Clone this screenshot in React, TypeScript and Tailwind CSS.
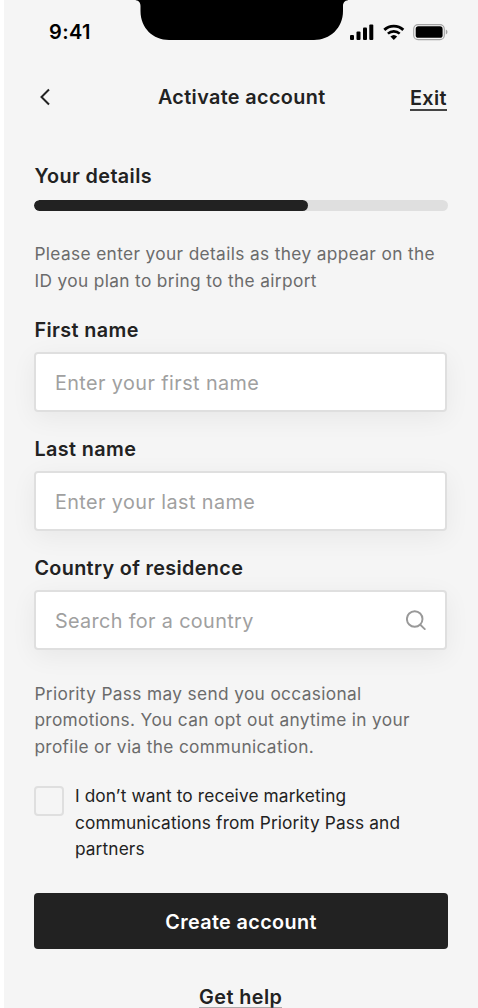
import React from "react";

function Notch() {
  return (
    <svg className="absolute left-[130px] top-0" width="216" height="41" viewBox="0 0 216 41">
      <path d="M0 0C4 0 6.500 2 6.500 6V11C6.500 28 19 40 35 40H180C196 40 209 28 209 11V6C209 2 211.500 0 216 0Z" fill="#000" />
    </svg>
  );
}

function StatusIcons() {
  return (
    <svg width="98" height="18" viewBox="0 0 98 18" fill="none">
      <g fill="#000">
        <rect x="0" y="11" width="4" height="5" rx="1" />
        <rect x="6.500" y="7.500" width="4" height="8.500" rx="1" />
        <rect x="13" y="3.500" width="4" height="12.500" rx="1" />
        <rect x="19.300" y="0.500" width="4" height="15.500" rx="1" />
      </g>
      <g transform="translate(33 0)">
        <path d="M1.300 5.900A14 14 0 0 1 20.300 5.900" stroke="#000" strokeWidth="2.800" />
        <path d="M4.900 9.600A8.800 8.800 0 0 1 16.700 9.600" stroke="#000" strokeWidth="2.600" />
        <path d="M10.800 16L7.400 12.600A5 5 0 0 1 14.200 12.600Z" fill="#000" />
      </g>
      <rect x="63.700" y="0.600" width="30.600" height="15" rx="4.400" stroke="#a3a3a3" strokeWidth="1.100" />
      <rect x="65.700" y="2.300" width="26.900" height="11.500" rx="2.600" fill="#000" />
      <path d="M95.800 5.600C98 6.400 98 9.800 95.800 10.600Z" fill="#a3a3a3" />
    </svg>
  );
}

type FieldProps = { label: string; placeholder: string; search?: boolean; textClass: string; labelClass: string };

function Field({ label, placeholder, search, textClass, labelClass }: FieldProps) {
  return (
    <label className="flex h-[119px] shrink-0 flex-col">
      <span className={`h-[34px] text-[19.8px] leading-6 font-[570] whitespace-nowrap ${labelClass}`}>{label}</span>
      <span className="flex h-[60px] w-[413px] items-center rounded-[4px] border-2 border-[#dfdfdf] bg-white pr-[19px] pl-[18.500px] shadow-[0_6px_26px_rgba(0,0,0,0.06)]">
        <input
          className={`mt-[2px] min-w-0 flex-1 bg-transparent text-[19.8px] leading-6 font-[440] outline-none placeholder:text-[#a0a0a0] ${textClass}`}
          placeholder={placeholder}
        />
        {search && (
          <svg className="mt-px" width="20" height="21" viewBox="0 0 20 21" fill="none" stroke="#999" strokeWidth="1.900" strokeLinecap="round">
            <circle cx="8.700" cy="9" r="7.800" />
            <path d="M14.300 14.700L18.800 19.100" />
          </svg>
        )}
      </span>
    </label>
  );
}

export default function App() {
  return (
    <div className="h-[1008px] w-[478px] overflow-hidden bg-white pl-1 font-['Inter',sans-serif] text-[#222]">
      <main className="relative flex h-full flex-col bg-[#f5f5f5] pr-[31px] pl-[30.400px]">
        <Notch />
        <div className="flex h-16 shrink-0 items-start justify-between pt-[20px]">
          <span className="ml-[14.600px] text-[20px] leading-6 font-[580] tracking-[0.400px] text-black">9:41</span>
          <div className="-mr-px pt-[4px]"><StatusIcons /></div>
        </div>
        <header className="flex h-[67px] shrink-0 items-center justify-between">
          <button aria-label="Back" className="mb-px w-[39px] pl-[4.500px]">
            <svg width="12" height="18" viewBox="0 0 12 18" fill="none" stroke="#222" strokeWidth="2">
              <path d="M10 1.500L2.500 9L10 16.500" />
            </svg>
          </button>
          <h1 className="mb-px text-[19.8px] leading-6 font-[570] tracking-[0.370px] whitespace-nowrap">Activate account</h1>
          <a href="#" className="mt-px h-[25px] border-b-2 border-[#444] text-[19.8px] leading-[24px] font-[570] tracking-[0.400px]">Exit</a>
        </header>
        <section className="h-[187px] shrink-0 pt-[33px]">
          <h2 className="text-[19.8px] leading-6 font-[570] tracking-[0.400px]">Your details</h2>
          <div className="mt-[12px] h-[11px] w-[413.300px] overflow-hidden rounded-full bg-[#dfdfdf]">
            <div className="h-full w-[273.500px] rounded-full bg-[#222]" />
          </div>
          <p className="mt-[30.200px] text-[17.3px] leading-[26.400px] font-[440] tracking-[0.360px] whitespace-nowrap text-[#6b6b6b]">
            Please enter your details as they appear on the<br />ID you plan to bring to the airport
          </p>
        </section>
        <form className="flex shrink-0 flex-col">
          <Field label="First name" placeholder="Enter your first name" labelClass="tracking-[0.400px]" textClass="tracking-[0.430px]" />
          <Field label="Last name" placeholder="Enter your last name" labelClass="tracking-[0.400px]" textClass="tracking-[0.430px]" />
          <Field label="Country of residence" placeholder="Search for a country" labelClass="tracking-[0.350px]" textClass="tracking-[0.370px]" search />
          <p className="mt-[6px] text-[17.3px] leading-[26.400px] font-[440] tracking-[0.350px] whitespace-nowrap text-[#6b6b6b]">
            Priority Pass may send you occasional<br />promotions. You can opt out anytime in your<br />profile or via the communication.
          </p>
          <label className="mt-[23px] flex h-[80px] gap-[10.500px]">
            <input type="checkbox" className="mt-[2.500px] size-[30px] appearance-none rounded-[4px] border-2 border-[#dfdfdf]" />
            <span className="text-[17.3px] leading-[26.400px] font-[440] tracking-[0.130px] whitespace-nowrap">
              I don’t want to receive marketing<br />communications from Priority Pass and<br />partners
            </span>
          </label>
          <button type="button" className="mt-[29.800px] h-[56px] w-[413.300px] rounded-[4px] bg-[#222] pt-px text-[19.8px] leading-6 font-[570] tracking-[0.380px] text-white">
            Create account
          </button>
          <a href="#" className="mt-[39px] h-[20px] self-center border-b border-[#aaa] text-[19.8px] leading-[19px] font-[570] tracking-[0.450px]">Get help</a>
        </form>
      </main>
    </div>
  );
}
